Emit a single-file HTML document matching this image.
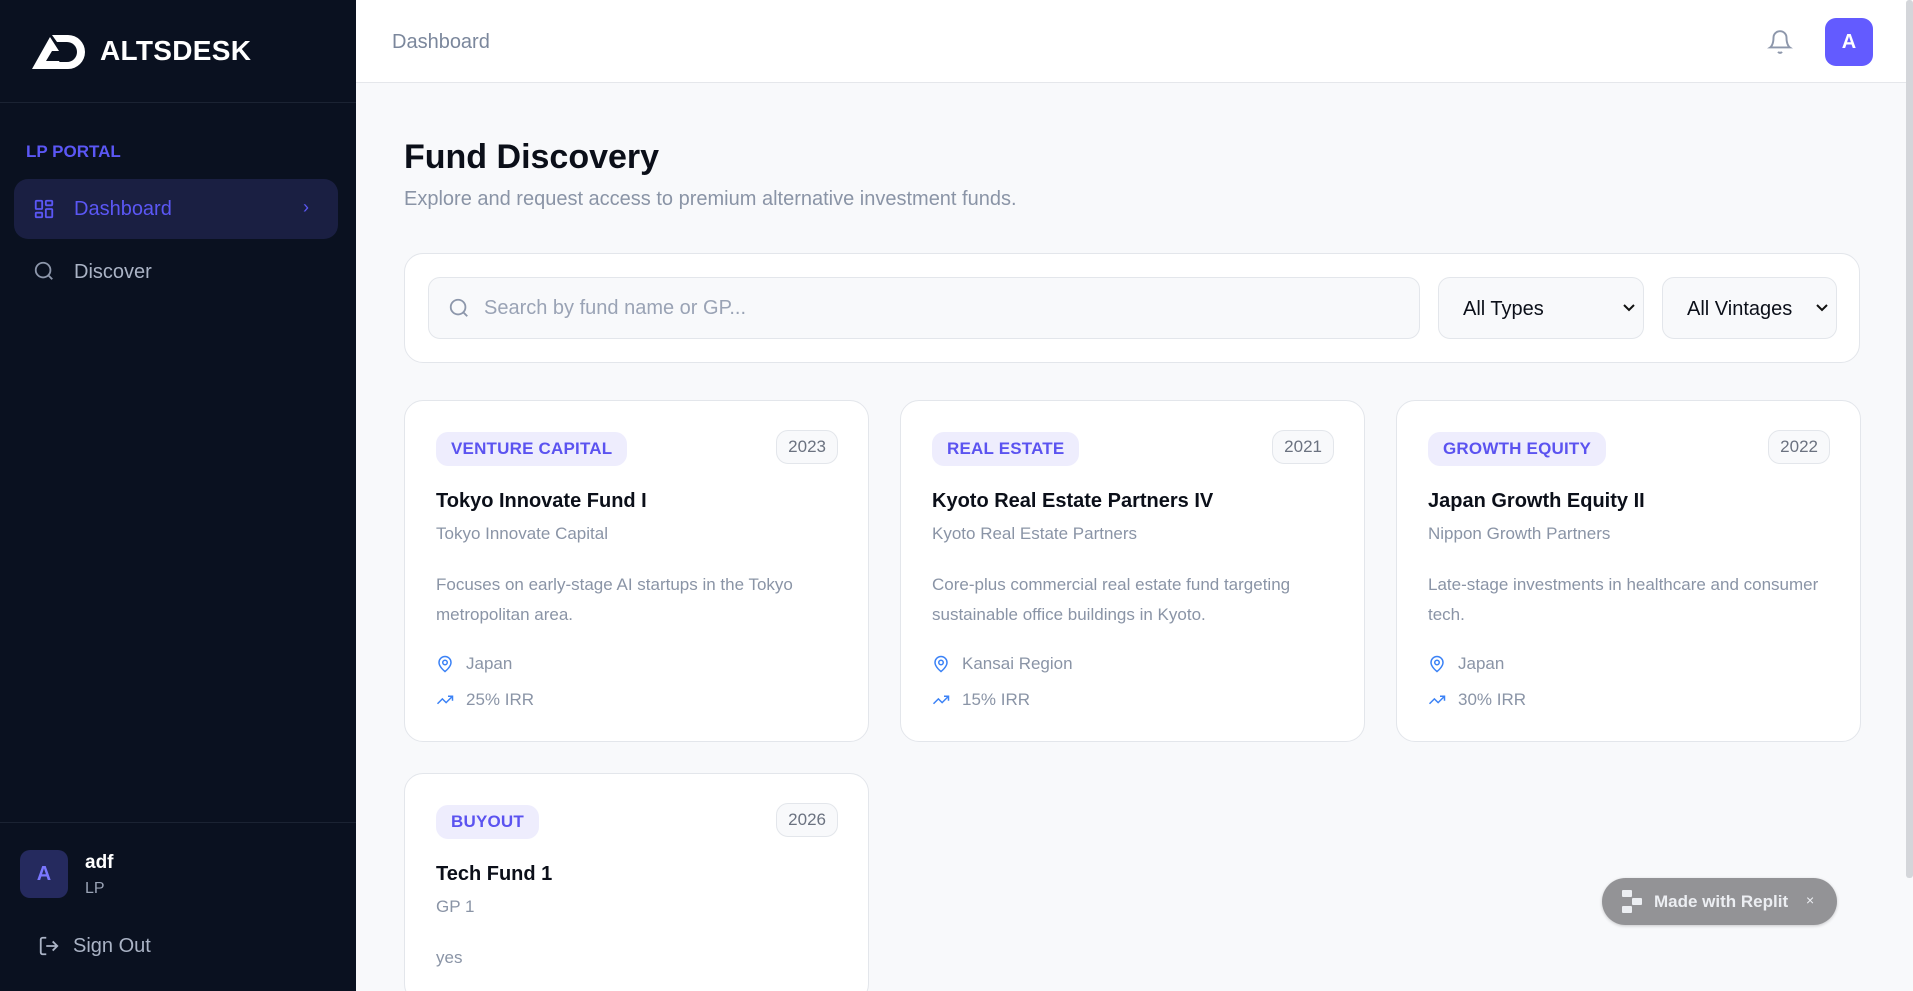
<!DOCTYPE html>
<html style="width:1913px;height:991px;overflow:hidden"><head><meta charset="utf-8"><style>
*{box-sizing:border-box;margin:0;padding:0}
body{width:1913px;height:991px;overflow:hidden;background:#f8f9fb;font-family:"Liberation Sans",sans-serif;position:relative}
.sb{position:absolute;left:0;top:0;width:356px;height:991px;background:#0a1120}
.abs{position:absolute}
.hdr{position:absolute;left:356px;top:0;right:0;height:83px;background:#fff;border-bottom:1px solid #e5e7eb}
.card{position:absolute;background:#fff;border:1px solid #e3e6eb;border-radius:19px;width:465px}
.badge{position:absolute;left:31px;top:31px;height:34px;padding:0 15px;border-radius:12px;background:#eeedfd;color:#5b53f0;font-size:17px;font-weight:bold;line-height:34px;letter-spacing:.2px}
.year{position:absolute;right:30px;top:29px;height:34px;padding:0 11px;border-radius:12px;border:1px solid #e3e6eb;background:#f8f9fb;color:#6b7280;font-size:17px;line-height:32px}
.t{position:absolute;left:31px;top:89px;font-size:20px;font-weight:bold;color:#0b0f19}
.gp{position:absolute;left:31px;top:123px;font-size:17px;color:#8a94a6}
.d{position:absolute;left:31px;top:169px;width:400px;font-size:17px;line-height:29.5px;color:#8a94a6}
.m{position:absolute;left:31px;font-size:17px;color:#8a94a6;display:flex;align-items:center;gap:12px}
.m svg{width:18px;height:18px}
</style></head><body>
<div class="sb">
 <svg class="abs" style="left:30px;top:33px" width="58" height="37" viewBox="0 0 58 37"><path d="M2 36 L20 4 L29 18 L22 18 L16 28 L29 28 L34 36Z" fill="#fff"/><path d="M22 2 H38 A17 17 0 0 1 38 36 H30 L26 29 H37 A10 10 0 0 0 37 9 H27Z" fill="#fff"/></svg>
 <div class="abs" style="left:100px;top:35px;font-size:28px;font-weight:bold;color:#fff;letter-spacing:.3px">ALTSDESK</div>
 <div class="abs" style="left:0;top:102px;width:356px;border-top:1px solid #1b2333"></div>
 <div class="abs" style="left:26px;top:142px;font-size:17px;font-weight:bold;color:#5b57f5">LP PORTAL</div>
 <div class="abs" style="left:14px;top:179px;width:324px;height:60px;border-radius:14px;background:#1a1f42"></div>
 <svg class="abs" style="left:33px;top:198px" width="22" height="22" viewBox="0 0 24 24" fill="none" stroke="#5b57f5" stroke-width="2"><rect x="3" y="3" width="7" height="9" rx="1"/><rect x="14" y="3" width="7" height="5" rx="1"/><rect x="14" y="12" width="7" height="9" rx="1"/><rect x="3" y="16" width="7" height="5" rx="1"/></svg>
 <div class="abs" style="left:74px;top:198px;font-size:20px;color:#5b57f5">Dashboard</div>
 <div class="abs" style="left:303px;top:197px;font-size:18px;color:#5b57f5">›</div>
 <svg class="abs" style="left:33px;top:260px" width="22" height="22" viewBox="0 0 24 24" fill="none" stroke="#8d97ab" stroke-width="2"><circle cx="11" cy="11" r="8"/><path d="M21 21l-4.3-4.3"/></svg>
 <div class="abs" style="left:74px;top:261px;font-size:20px;color:#aab3c5">Discover</div>
 <div class="abs" style="left:0;top:822px;width:356px;border-top:1px solid #1b2333"></div>
 <div class="abs" style="left:20px;top:850px;width:48px;height:48px;border-radius:10px;background:#252a5e;color:#7b77ff;font-size:20px;font-weight:bold;text-align:center;line-height:48px">A</div>
 <div class="abs" style="left:85px;top:852px;font-size:19px;font-weight:bold;color:#fff">adf</div>
 <div class="abs" style="left:85px;top:880px;font-size:16px;color:#9aa3b5">LP</div>
 <svg class="abs" style="left:38px;top:935px" width="22" height="22" viewBox="0 0 24 24" fill="none" stroke="#aab3c5" stroke-width="2"><path d="M9 21H5a2 2 0 0 1-2-2V5a2 2 0 0 1 2-2h4M16 17l5-5-5-5M21 12H9"/></svg>
 <div class="abs" style="left:73px;top:935px;font-size:20px;color:#aab3c5">Sign Out</div>
</div>
<div class="hdr">
 <div class="abs" style="left:36px;top:31px;font-size:20px;color:#7b879c">Dashboard</div>
 <svg class="abs" style="left:1411px;top:28px" width="26" height="28" viewBox="0 0 24 24" fill="none" stroke="#8d97ab" stroke-width="1.8"><path d="M6 8a6 6 0 0 1 12 0c0 7 3 9 3 9H3s3-2 3-9M10.3 21a1.94 1.94 0 0 0 3.4 0"/></svg>
 <div class="abs" style="left:1469px;top:18px;width:48px;height:48px;border-radius:11px;background:#635bff;color:#fff;font-size:20px;font-weight:bold;text-align:center;line-height:48px">A</div>
</div>
<div class="abs" style="right:0;top:0;width:7px;height:878px;background:#d4d6da;border-radius:3px"></div>
<div class="abs" style="left:404px;top:138px;font-size:34px;font-weight:bold;color:#0b0f19">Fund Discovery</div>
<div class="abs" style="left:404px;top:188px;font-size:20px;color:#8a94a6">Explore and request access to premium alternative investment funds.</div>
<div class="abs" style="left:404px;top:253px;width:1456px;height:110px;background:#fff;border:1px solid #e3e6eb;border-radius:19px"></div>
<div class="abs" style="left:428px;top:277px;width:992px;height:62px;background:#f8f9fb;border:1px solid #e3e6eb;border-radius:12px"></div>
<svg class="abs" style="left:448px;top:297px" width="22" height="22" viewBox="0 0 24 24" fill="none" stroke="#8d97ab" stroke-width="2"><circle cx="11" cy="11" r="8"/><path d="M21 21l-4.3-4.3"/></svg>
<div class="abs" style="left:484px;top:297px;font-size:20px;color:#9aa3b5">Search by fund name or GP...</div>
<div class="abs" style="left:1438px;top:277px;width:206px;height:62px;background:#f8f9fb;border:1px solid #e3e6eb;border-radius:12px"></div>
<div class="abs" style="left:1463px;top:298px;font-size:20px;color:#0b0f19">All Types</div>
<svg class="abs" style="left:1622px;top:301px" width="14" height="14" viewBox="0 0 14 14" fill="none" stroke="#111" stroke-width="2"><path d="M2 4l5 5 5-5"/></svg>
<div class="abs" style="left:1662px;top:277px;width:175px;height:62px;background:#f8f9fb;border:1px solid #e3e6eb;border-radius:12px"></div>
<div class="abs" style="left:1687px;top:298px;font-size:20px;color:#0b0f19">All Vintages</div>
<svg class="abs" style="left:1815px;top:301px" width="14" height="14" viewBox="0 0 14 14" fill="none" stroke="#111" stroke-width="2"><path d="M2 4l5 5 5-5"/></svg>

<div class="card" style="left:404px;top:400px;height:342px">
 <div class="badge">VENTURE CAPITAL</div><div class="year">2023</div>
 <div class="t">Tokyo Innovate Fund I</div><div class="gp">Tokyo Innovate Capital</div>
 <div class="d">Focuses on early-stage AI startups in the Tokyo metropolitan area.</div>
 <div class="m" style="top:253px"><svg viewBox="0 0 24 24" fill="none" stroke="#3b82f6" stroke-width="2"><path d="M20 10c0 6-8 12-8 12s-8-6-8-12a8 8 0 0 1 16 0Z"/><circle cx="12" cy="10" r="3"/></svg>Japan</div>
 <div class="m" style="top:289px"><svg viewBox="0 0 24 24" fill="none" stroke="#3b82f6" stroke-width="2"><path d="M22 7l-8.5 8.5-5-5L2 17M16 7h6v6"/></svg>25% IRR</div>
</div>
<div class="card" style="left:900px;top:400px;height:342px">
 <div class="badge">REAL ESTATE</div><div class="year">2021</div>
 <div class="t">Kyoto Real Estate Partners IV</div><div class="gp">Kyoto Real Estate Partners</div>
 <div class="d">Core-plus commercial real estate fund targeting sustainable office buildings in Kyoto.</div>
 <div class="m" style="top:253px"><svg viewBox="0 0 24 24" fill="none" stroke="#3b82f6" stroke-width="2"><path d="M20 10c0 6-8 12-8 12s-8-6-8-12a8 8 0 0 1 16 0Z"/><circle cx="12" cy="10" r="3"/></svg>Kansai Region</div>
 <div class="m" style="top:289px"><svg viewBox="0 0 24 24" fill="none" stroke="#3b82f6" stroke-width="2"><path d="M22 7l-8.5 8.5-5-5L2 17M16 7h6v6"/></svg>15% IRR</div>
</div>
<div class="card" style="left:1396px;top:400px;height:342px">
 <div class="badge">GROWTH EQUITY</div><div class="year">2022</div>
 <div class="t">Japan Growth Equity II</div><div class="gp">Nippon Growth Partners</div>
 <div class="d">Late-stage investments in healthcare and consumer tech.</div>
 <div class="m" style="top:253px"><svg viewBox="0 0 24 24" fill="none" stroke="#3b82f6" stroke-width="2"><path d="M20 10c0 6-8 12-8 12s-8-6-8-12a8 8 0 0 1 16 0Z"/><circle cx="12" cy="10" r="3"/></svg>Japan</div>
 <div class="m" style="top:289px"><svg viewBox="0 0 24 24" fill="none" stroke="#3b82f6" stroke-width="2"><path d="M22 7l-8.5 8.5-5-5L2 17M16 7h6v6"/></svg>30% IRR</div>
</div>
<div class="card" style="left:404px;top:773px;height:230px">
 <div class="badge">BUYOUT</div><div class="year">2026</div>
 <div class="t">Tech Fund 1</div><div class="gp">GP 1</div>
 <div class="d">yes</div>
</div>
<div class="abs" style="left:1602px;top:878px;width:235px;height:47px;border-radius:24px;background:#939396;box-shadow:0 1px 3px rgba(0,0,0,.2)"></div>
<svg class="abs" style="left:1622px;top:890px" width="22" height="24" viewBox="0 0 22 24" fill="#eceef2"><rect x="0" y="0" width="10" height="7" rx="1"/><rect x="10" y="8" width="10" height="7" rx="1"/><rect x="0" y="16" width="10" height="7" rx="1"/></svg>
<div class="abs" style="left:1654px;top:892px;font-size:17px;font-weight:bold;color:#eceef2">Made with Replit</div>
<div class="abs" style="left:1806px;top:892px;font-size:14px;color:#eceef2">×</div>
</body></html>
